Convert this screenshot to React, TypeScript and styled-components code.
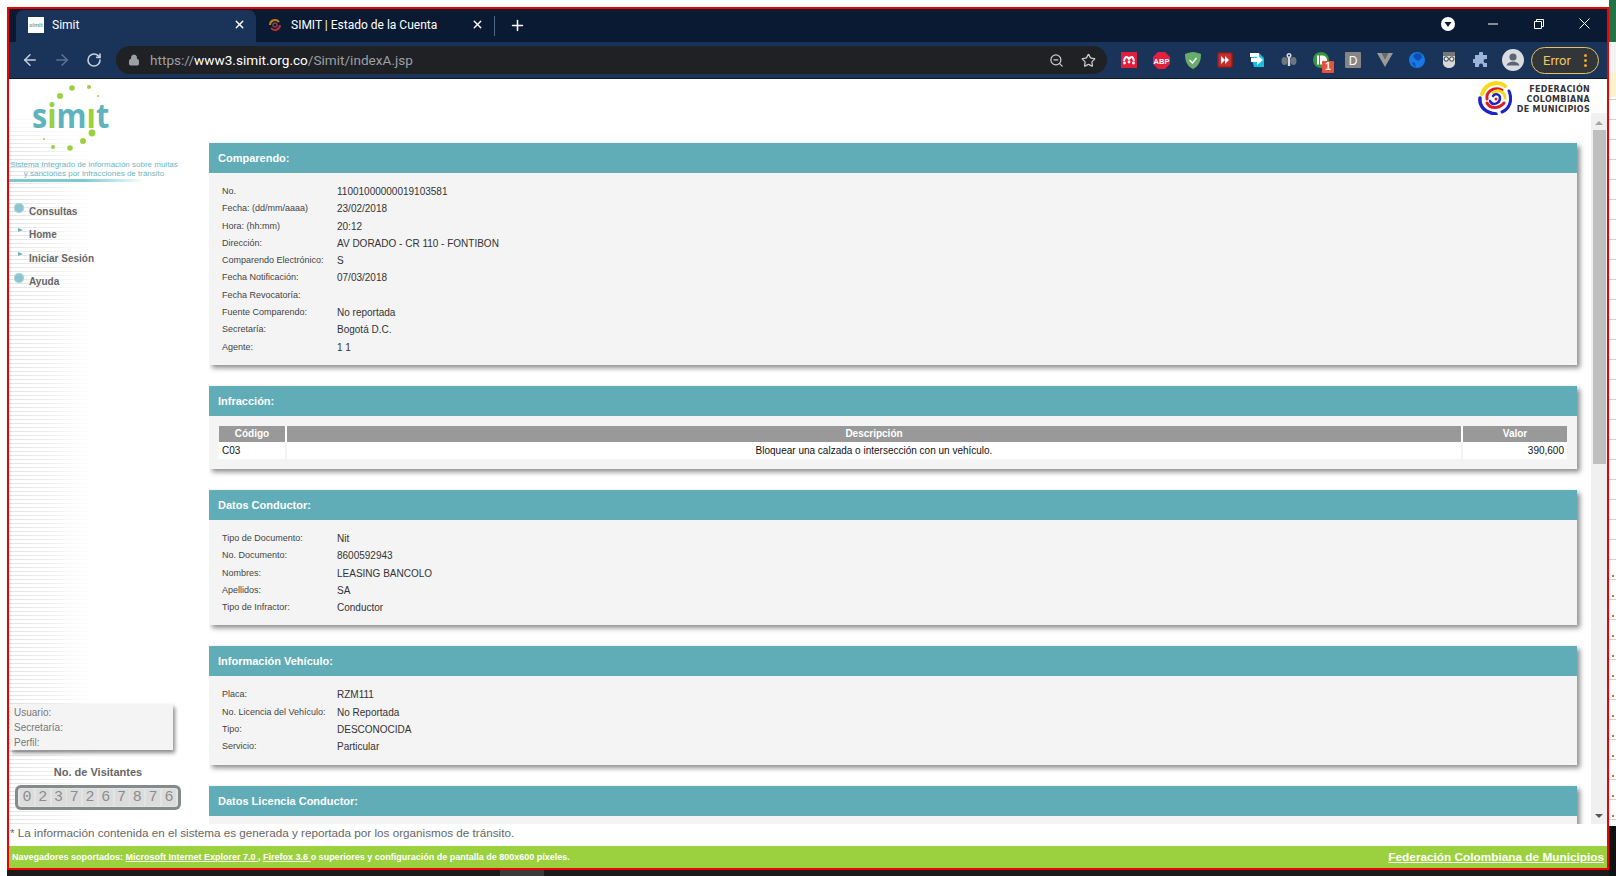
import React from 'react';
import styled, { createGlobalStyle } from 'styled-components';
import { ArrowLeft, ArrowRight, RotateCw, Lock, ZoomOut, Star, Plus, X } from 'lucide-react';

const comparendo = [
  ['No.', '11001000000019103581'],
  ['Fecha: (dd/mm/aaaa)', '23/02/2018'],
  ['Hora: (hh:mm)', '20:12'],
  ['Dirección:', 'AV DORADO - CR 110 - FONTIBON'],
  ['Comparendo Electrónico:', 'S'],
  ['Fecha Notificación:', '07/03/2018'],
  ['Fecha Revocatoría:', ''],
  ['Fuente Comparendo:', 'No reportada'],
  ['Secretaría:', 'Bogotá D.C.'],
  ['Agente:', '1 1'],
];

const conductor = [
  ['Tipo de Documento:', 'Nit'],
  ['No. Documento:', '8600592943'],
  ['Nombres:', 'LEASING BANCOLO'],
  ['Apellidos:', 'SA'],
  ['Tipo de Infractor:', 'Conductor'],
];

const vehiculo = [
  ['Placa:', 'RZM111'],
  ['No. Licencia del Vehículo:', 'No Reportada'],
  ['Tipo:', 'DESCONOCIDA'],
  ['Servicio:', 'Particular'],
];

const GlobalStyle = createGlobalStyle`
  html, body {
    margin: 0;
    padding: 0;
    overflow: hidden;
    background: #fff;
  }
  * {
    box-sizing: border-box;
  }
`;

const Screen = styled.div`
  display: flex;
  width: 1616px;
  height: 876px;
  overflow: hidden;
  font-family: 'Liberation Sans', Arial, sans-serif;
`;

const WindowColumn = styled.div`
  display: flex;
  flex-direction: column;
  width: 1609px;
  padding: 7px 0 0 7px;
`;

const BrowserWindow = styled.div`
  display: flex;
  flex-direction: column;
  height: 863px;
  border: 2px solid #f00000;
  background: #fff;
`;

const Taskbar = styled.div`
  flex: 1;
  overflow: hidden;
  padding: 4px 0 0 1538px;
  background: linear-gradient(to right, #1b1b1b 0 493px, #3a3a3a 493px 537px, #1b1b1b 537px);
  color: #fff;
  font-family: 'Noto Sans', sans-serif;
  font-size: 11px;
  line-height: 12px;
`;

const Peek = styled.div`
  flex: 1;
  background:
    repeating-linear-gradient(to bottom, transparent 0 19px, #cfcfcf 19px 20px),
    #fff;
  display: flex;
  flex-direction: column;
`;

const PeekBand = styled.div<{ $h: number; $c: string }>`
  height: ${p => p.$h}px;
  background: ${p => p.$c};
`;

const PeekFill = styled.div`
  flex: 1;
`;

const PeekMarks = styled.div`
  height: 260px;
  background: repeating-linear-gradient(to bottom, transparent 0 9px, #b5763a 9px 11px, transparent 11px 20px) 3px 0 / 2px 100% no-repeat;
`;

const TabStrip = styled.div`
  display: flex;
  align-items: flex-end;
  height: 33px;
  padding-left: 7px;
  background: #0a1a33;
  color: #fff;
  font-family: Roboto, 'Noto Sans', sans-serif;
  font-size: 12px;
`;

const Tab = styled.div<{ $active?: boolean }>`
  display: flex;
  align-items: center;
  width: ${p => (p.$active ? 240 : 238)}px;
  height: 32px;
  padding: 0 10px 3px ${p => (p.$active ? 12 : 11)}px;
  border-radius: 8px 8px 0 0;
  background: ${p => (p.$active ? '#1a3358' : 'transparent')};
`;

const TabTitle = styled.span`
  flex: 1;
  margin-left: 8px;
  white-space: nowrap;
`;

const FaviconBox = styled.span`
  display: flex;
  align-items: center;
  justify-content: center;
  width: 16px;
  height: 16px;
  background: #fff;
  color: #6aaeb8;
  font-size: 6px;
  font-weight: 700;
`;

const TabDivider = styled.span`
  width: 1px;
  height: 20px;
  margin-bottom: 6px;
  background: #54657e;
`;

const NewTab = styled.span`
  display: flex;
  margin: 0 0 8px 14px;
`;

const CaptionControls = styled.div`
  display: flex;
  align-items: center;
  margin-left: auto;
  align-self: stretch;
`;

const CaptionButton = styled.span<{ $w: number }>`
  display: flex;
  align-items: center;
  justify-content: center;
  width: ${p => p.$w}px;
  height: 100%;
  padding-bottom: 4px;
`;

const Toolbar = styled.div`
  display: flex;
  align-items: center;
  height: 37px;
  padding: 0 6px 0 5px;
  background: #1a3358;
  border-bottom: 1px solid #0a1a33;
`;

const NavButton = styled.span<{ $dim?: boolean }>`
  display: flex;
  align-items: center;
  justify-content: center;
  width: 32px;
  color: ${p => (p.$dim ? '#5f7391' : '#c5d0e0')};
`;

const Omnibox = styled.div`
  display: flex;
  align-items: center;
  width: 991px;
  height: 28px;
  margin: 0 6px;
  padding: 0 3px 0 12px;
  border-radius: 14px;
  background: #202124;
  color: #9aa0a6;
  font-family: Roboto, 'Noto Sans', sans-serif;
  font-size: 13.6px;
`;

const Url = styled.span`
  flex: 1;
  margin-left: 10px;
  white-space: nowrap;
`;

const UrlHost = styled.span`
  color: #fff;
`;

const OmniAction = styled.span`
  display: flex;
  width: 32px;
  justify-content: center;
  color: #c9ccd1;
`;

const Extension = styled.span`
  position: relative;
  display: flex;
  align-items: center;
  justify-content: center;
  width: 32px;
  height: 24px;
`;

const Badge = styled.span`
  position: absolute;
  left: 17px;
  top: 13px;
  width: 12px;
  height: 12px;
  border-radius: 1px;
  background: #e8503f;
  color: #fff;
  font: 700 10px/12px 'Liberation Sans', sans-serif;
  text-align: center;
`;

const ErrorPill = styled.div`
  display: flex;
  align-items: center;
  justify-content: space-between;
  width: 68px;
  height: 27px;
  margin-left: 2px;
  padding: 0 11px 0 11px;
  border: 1px solid #e8c35a;
  border-radius: 14px;
  background: #323639;
  color: #f0c766;
  font-family: Roboto, 'Noto Sans', sans-serif;
  font-size: 13px;
`;

const Kebab = styled.span`
  display: flex;
  flex-direction: column;
  gap: 2px;
`;

const KebabDot = styled.span`
  width: 3px;
  height: 3px;
  border-radius: 50%;
  background: #f5a623;
`;

const Page = styled.div`
  display: flex;
  flex: 1;
  min-height: 0;
`;

const Sidebar = styled.aside`
  display: flex;
  flex-direction: column;
  width: 200px;
  padding-bottom: 14px;
  background:
    linear-gradient(to bottom, #fff 0 35px, rgba(255, 255, 255, 0) 70px),
    linear-gradient(to right, rgba(255, 255, 255, 0), #fff 85px),
    repeating-linear-gradient(to bottom, #e2e2e2 0 1px, #fff 1px 4px);
`;

const LogoMark = styled.svg`
  display: block;
  margin: 1px 0 0 11px;
`;

const Tagline = styled.div`
  width: 170px;
  margin-top: 5px;
  color: #6eb6c4;
  font-size: 8px;
  line-height: 9px;
  text-align: center;
  white-space: nowrap;
`;

const BrandRule = styled.div`
  width: 136px;
  height: 3px;
  margin-top: 1px;
  background: linear-gradient(to right, #7cc9d2 55%, rgba(124, 201, 210, 0));
`;

const Menu = styled.nav`
  margin-top: 18px;
`;

const MenuItem = styled.div`
  position: relative;
  height: 23.3px;
  padding-left: 20px;
  color: #666;
  font-size: 10px;
  font-weight: 700;
  line-height: 23.3px;
`;

const MenuDisc = styled.span`
  position: absolute;
  left: 5px;
  top: 3px;
  width: 10px;
  height: 10px;
  border-radius: 50%;
  background: #8cc5cf;
  box-shadow: inset 0 0 0 1px #a9d6dd;
`;

const MenuArrow = styled.span`
  position: absolute;
  left: 9px;
  top: 5px;
  border-left: 5px solid #6fb3bf;
  border-top: 2.5px solid transparent;
  border-bottom: 2.5px solid transparent;
`;

const UserBox = styled.div`
  width: 163px;
  margin: auto 0 0 1px;
  padding: 1px 0 0 4px;
  background: #f4f4f4;
  box-shadow: 2px 3px 4px rgba(0, 0, 0, 0.45);
  color: #777;
  font-size: 10px;
  line-height: 15px;
`;

const VisitorTitle = styled.div`
  width: 178px;
  margin-top: 14px;
  color: #666;
  font-size: 11px;
  font-weight: 700;
  line-height: 16px;
  text-align: center;
`;

const Counter = styled.div`
  display: flex;
  justify-content: space-between;
  width: 166px;
  height: 25px;
  margin: 5px 0 0 6px;
  padding: 4px 5px;
  border-radius: 6px;
  background: #e4e4e4;
  box-shadow: inset 0 0 0 3px #858b8b;
`;

const CounterDigit = styled.span`
  width: 14px;
  background-color: #dcdcdc;
  background-image: radial-gradient(#bcbcbc 0.5px, transparent 0.6px);
  background-size: 2px 2px;
  color: #8c8c8c;
  font: 15px/17px 'Liberation Mono', monospace;
  text-align: center;
`;

const Main = styled.main`
  display: flex;
  flex-direction: column;
  flex: 1;
  min-width: 0;
`;

const TopBar = styled.div`
  display: flex;
  justify-content: flex-end;
  gap: 5px;
  height: 34px;
  padding: 2px 17px 0 0;
`;

const FederationName = styled.div`
  color: #333;
  font-family: 'DejaVu Sans', sans-serif;
  font-size: 8px;
  font-weight: 700;
  letter-spacing: 0.3px;
  line-height: 10px;
  padding-top: 4px;
  text-align: right;
`;

const ScrollRegion = styled.div`
  display: flex;
  flex: 1;
  min-height: 0;
`;

const Panels = styled.div`
  flex: 1;
  display: flex;
  flex-direction: column;
  gap: 21px;
  padding: 30px 14px 0 0;
  overflow: hidden;
`;

const Section = styled.section`
  flex: none;
  background: #f4f4f4;
  box-shadow: 3px 3px 5px rgba(0, 0, 0, 0.45);
`;

const SectionHeader = styled.h2`
  height: 30px;
  margin: 0;
  padding-left: 9px;
  background: #60acb7;
  color: #fff;
  font-size: 11px;
  font-weight: 700;
  line-height: 31px;
`;

const InfoList = styled.div`
  padding: 10px 0 9px 13px;
`;

const InfoRow = styled.div`
  display: grid;
  grid-template-columns: 115px 1fr;
  height: 17.3px;
  font-size: 10px;
  line-height: 17px;
`;

const InfoLabel = styled.span`
  color: #444;
  font-size: 9px;
  white-space: nowrap;
`;

const InfoValue = styled.span`
  color: #333;
`;

const TableWrap = styled.div`
  padding: 10px;
`;

const Grid = styled.div<{ $sep: string; $bg: string }>`
  display: grid;
  grid-template-columns: 66px 1fr 104px;
  column-gap: 2px;
  background: ${p => p.$sep};
  & > * {
    background: ${p => p.$bg};
  }
`;

const HeadCell = styled.div`
  height: 16px;
  color: #fff;
  font-size: 10px;
  font-weight: 700;
  line-height: 16px;
  text-align: center;
`;

const BodyCell = styled.div<{ $align?: string }>`
  height: 17px;
  padding: 0 3px;
  color: #111;
  font-size: 10px;
  line-height: 18px;
  text-align: ${p => p.$align || 'left'};
`;

const Scrollbar = styled.div`
  display: flex;
  flex-direction: column;
  align-items: center;
  width: 16px;
  background: #f0f0f0;
`;

const ScrollArrow = styled.span<{ $down?: boolean }>`
  height: 10px;
  margin-top: ${p => (p.$down ? 'auto' : '2px')};
  margin-bottom: ${p => (p.$down ? '0' : '-6px')};
  border-left: 4px solid transparent;
  border-right: 4px solid transparent;
  ${p => (p.$down ? 'border-top: 4px solid #555;' : 'border-bottom: 4px solid #a3a3a3;')}
`;

const ScrollThumb = styled.div`
  width: 13px;
  height: 334px;
  margin-top: 11px;
  background: #bfbfbf;
`;

const Note = styled.div`
  height: 22px;
  padding-left: 1px;
  color: #666;
  font-size: 11.7px;
  line-height: 18px;
`;

const FooterBar = styled.footer`
  display: flex;
  align-items: center;
  justify-content: space-between;
  height: 22px;
  padding: 0 3px 0 3px;
  background: #9bd03f;
  color: #fff;
  font-size: 9px;
  font-weight: 700;
`;

const FooterLink = styled.a<{ $big?: boolean }>`
  color: #fff;
  font-size: ${p => (p.$big ? 11.8 : 9)}px;
  text-decoration: underline;
`;

const Swirl = () => (
  <svg width="34" height="34" viewBox="0 0 34 34" fill="none" strokeLinecap="round">
    <path d="M4 13 C7 3 19 -1 27 5" stroke="#f5dc1a" strokeWidth="4" />
    <path d="M31 10 C35 20 31 28 24 31" stroke="#1c22c8" strokeWidth="3" />
    <path d="M2 17 C1 26 8 32 18 33" stroke="#1c22c8" strokeWidth="3.5" />
    <path d="M24 9 C15 5 8 11 9 18" stroke="#e01b24" strokeWidth="3" />
    <path d="M9 22 C12 28 21 28 26 22" stroke="#e01b24" strokeWidth="3" />
    <path d="M27 17 C27 10 19 8 15 12" stroke="#f5dc1a" strokeWidth="3" />
    <path d="M12 20 C14 25 22 23 22 17 C22 13 17 12 15 15" stroke="#1c22c8" strokeWidth="2.5" />
    <circle cx="18" cy="18" r="1.5" fill="#e01b24" />
  </svg>
);

const SmallSwirl = () => (
  <svg width="16" height="16" viewBox="0 0 16 16" fill="none">
    <path d="M3 8a5 5 0 0 1 9-3" stroke="#b8801a" strokeWidth="2" />
    <path d="M13 8a5 5 0 0 1-9 3" stroke="#b8352b" strokeWidth="2" />
    <circle cx="8" cy="8" r="2" stroke="#8a3b5a" strokeWidth="1.5" />
  </svg>
);

const SimitLogo = () => (
  <LogoMark width="110" height="75" viewBox="20 80 110 75">
    <text
      transform="translate(32 128) scale(0.9 1)"
      fontFamily="'Open Sans', sans-serif"
      fontWeight="700"
      fontSize="34"
      fill="#5fb3bd"
    >
      s<tspan fill="#9bd03f">i</tspan>m<tspan fill="#9bd03f">ı</tspan>t
    </text>
    <g fill="#9bd03f">
      <circle cx="72" cy="88" r="2.8" />
      <circle cx="89" cy="87" r="2" />
      <circle cx="98" cy="96" r="1" />
      <circle cx="60" cy="96" r="3" />
      <circle cx="92" cy="133" r="3.4" />
      <circle cx="83" cy="141" r="3" />
      <circle cx="70" cy="148" r="2.8" />
      <circle cx="53" cy="147" r="2" />
      <circle cx="44" cy="139" r="1" />
    </g>
  </LogoMark>
);

const extensions = [
  <svg key="mendeley" width="16" height="16" viewBox="0 0 16 16">
    <rect width="16" height="16" fill="#e01f3d" />
    <path d="M3 9c1-5 3-5 5-2 2-3 4-3 5 2" fill="none" stroke="#fff" strokeWidth="2" />
    <circle cx="3.5" cy="11" r="1.4" fill="#fff" />
    <circle cx="8" cy="10" r="1.4" fill="#fff" />
    <circle cx="12.5" cy="11" r="1.4" fill="#fff" />
  </svg>,
  <svg key="abp" width="17" height="17" viewBox="0 0 17 17">
    <path d="M5 0h7l5 5v7l-5 5H5l-5-5V5z" fill="#e3213f" />
    <text x="8.5" y="11.5" fontSize="7.5" fontWeight="700" fill="#fff" textAnchor="middle" fontFamily="'Liberation Sans', sans-serif">
      ABP
    </text>
  </svg>,
  <svg key="guard" width="16" height="17" viewBox="0 0 16 17">
    <path d="M8 0c3 0 5 1 8 2 0 7-2 12-8 15C2 14 0 9 0 2c3-1 5-2 8-2z" fill="#68ac6c" />
    <path d="M4.5 8l3 3 4-5" fill="none" stroke="#fff" strokeWidth="1.4" />
  </svg>,
  <svg key="ff" width="16" height="16" viewBox="0 0 16 16">
    <rect x="0.8" y="0.8" width="14.4" height="14.4" rx="2" fill="#c62f2f" stroke="#7c2020" strokeWidth="1.6" />
    <path d="M4 4l4 4-4 4zM8 4l4 4-4 4z" fill="#fff" />
  </svg>,
  <svg key="share" width="16" height="16" viewBox="0 0 16 16">
    <path d="M1 1h9l5 5v9H5z" fill="#14bfe0" />
    <path d="M1 1h9v4H1z" fill="#fff" />
    <path d="M2 6h6V3l6 5-6 5v-3H2z" fill="#fff" />
  </svg>,
  <svg key="wrench" width="16" height="16" viewBox="0 0 16 16">
    <ellipse cx="3.5" cy="9" rx="3" ry="4" fill="#6f7680" />
    <ellipse cx="12.5" cy="9" rx="3" ry="4" fill="#6f7680" />
    <rect x="6.8" y="4" width="2.4" height="10" fill="#d7dade" />
    <circle cx="8" cy="3.5" r="2.5" fill="#d7dade" />
    <circle cx="8" cy="3.5" r="1" fill="#1a3358" />
  </svg>,
  <svg key="pause" width="16" height="16" viewBox="0 0 16 16">
    <circle cx="8" cy="8" r="8" fill="#3b963f" />
    <rect x="4" y="3.5" width="2" height="9" fill="#fff" />
    <path d="M7 3.5h2.5a4 4 0 0 1 0 9H7z" fill="#fff" />
  </svg>,
  <svg key="d" width="16" height="16" viewBox="0 0 16 16">
    <rect width="16" height="16" rx="1" fill="#858585" />
    <text x="8" y="12.5" fontSize="12" fill="#fff" textAnchor="middle" fontFamily="'Liberation Sans', sans-serif">
      D
    </text>
  </svg>,
  <svg key="v" width="16" height="14" viewBox="0 0 16 14">
    <path d="M0 0h5l3 6 3-6h5L8 14z" fill="#9a9a9a" />
    <path d="M5 0h6L8 6z" fill="#6c6c6c" />
  </svg>,
  <svg key="globe" width="16" height="16" viewBox="0 0 16 16">
    <circle cx="8" cy="8" r="8" fill="#1978e5" />
    <path d="M7 1l5 1 1 4-4 3-3-2-2-3zM3 10l3 1 1 4-3-2z" fill="#0c4fb3" />
  </svg>,
  <svg key="face" width="14" height="16" viewBox="0 0 14 16">
    <path d="M1 5c0-3 3-5 6-5s6 2 6 5v6c0 3-3 5-6 5s-6-2-6-5z" fill="#d8d8d8" />
    <path d="M1 0h12v4H1z" fill="#777" />
    <circle cx="4.2" cy="7" r="2.2" fill="#eee" stroke="#333" />
    <circle cx="9.8" cy="7" r="2.2" fill="#eee" stroke="#333" />
  </svg>,
  <svg key="puzzle" width="16" height="16" viewBox="0 0 16 16">
    <path
      d="M6 1.5a2 2 0 0 1 4 0V3h4v4h-1.5a2 2 0 0 0 0 4H14v4h-4v-1.5a2 2 0 0 0-4 0V15H2v-4H.8a2 2 0 0 1 0-4H2V3h4z"
      fill="#9cb4d8"
    />
  </svg>,
  <svg key="avatar" width="22" height="22" viewBox="0 0 22 22">
    <circle cx="11" cy="11" r="11" fill="#dadce0" />
    <circle cx="11" cy="8" r="3.6" fill="#5a6678" />
    <path d="M4.5 16.5c1-3 4-4 6.5-4s5.500 1 6.500 4z" fill="#5a6678" />
  </svg>,
];

const InfoSection = ({ title, rows }: { title: string; rows: string[][] }) => (
  <Section>
    <SectionHeader>{title}</SectionHeader>
    <InfoList>
      {rows.map(([label, value]) => (
        <InfoRow key={label}>
          <InfoLabel>{label}</InfoLabel>
          <InfoValue>{value}</InfoValue>
        </InfoRow>
      ))}
    </InfoList>
  </Section>
);

export default function App() {
  return (
    <Screen>
      <GlobalStyle />
      <WindowColumn>
        <BrowserWindow>
          <TabStrip>
            <Tab $active>
              <FaviconBox>simit</FaviconBox>
              <TabTitle>Simit</TabTitle>
              <X size={13} strokeWidth={2.5} />
            </Tab>
            <Tab>
              <SmallSwirl />
              <TabTitle>SIMIT | Estado de la Cuenta</TabTitle>
              <X size={13} strokeWidth={2.5} />
            </Tab>
            <TabDivider />
            <NewTab>
              <Plus size={17} strokeWidth={2.2} />
            </NewTab>
            <CaptionControls>
              <CaptionButton $w={46}>
                <svg width="14" height="14" viewBox="0 0 14 14">
                  <circle cx="7" cy="7" r="7" fill="#fff" />
                  <path d="M3.500 5h7L7 10z" fill="#0a1a33" />
                </svg>
              </CaptionButton>
              <CaptionButton $w={44}>
                <svg width="10" height="10" viewBox="0 0 10 10">
                  <path d="M0 5h10" stroke="#fff" />
                </svg>
              </CaptionButton>
              <CaptionButton $w={47}>
                <svg width="10" height="10" viewBox="0 0 10 10" fill="none" stroke="#fff">
                  <path d="M.5 2.500h7v7h-7zM2.500 2.500v-2h7v7h-2" />
                </svg>
              </CaptionButton>
              <CaptionButton $w={45}>
                <svg width="11" height="11" viewBox="0 0 11 11" stroke="#fff">
                  <path d="M.5.5l10 10M10.500.5l-10 10" />
                </svg>
              </CaptionButton>
            </CaptionControls>
          </TabStrip>
          <Toolbar>
            <NavButton>
              <ArrowLeft size={18} />
            </NavButton>
            <NavButton $dim>
              <ArrowRight size={18} />
            </NavButton>
            <NavButton>
              <RotateCw size={16} strokeWidth={2.4} />
            </NavButton>
            <Omnibox>
              <Lock size={12} fill="#9aa0a6" />
              <Url>
                https://<UrlHost>www3.simit.org.co</UrlHost>/Simit/indexA.jsp
              </Url>
              <OmniAction>
                <ZoomOut size={15} />
              </OmniAction>
              <OmniAction>
                <Star size={15} />
              </OmniAction>
            </Omnibox>
            {extensions.map((icon, i) => (
              <Extension key={i}>
                {icon}
                {i === 6 && <Badge>1</Badge>}
              </Extension>
            ))}
            <ErrorPill>
              Error
              <Kebab>
                <KebabDot />
                <KebabDot />
                <KebabDot />
              </Kebab>
            </ErrorPill>
          </Toolbar>
          <Page>
            <Sidebar>
              <SimitLogo />
              <Tagline>
                Sistema Integrado de información sobre multas
                <br />y sanciones por infracciones de tránsito
              </Tagline>
              <BrandRule />
              <Menu>
                <MenuItem>
                  <MenuDisc />
                  Consultas
                </MenuItem>
                <MenuItem>
                  <MenuArrow />
                  Home
                </MenuItem>
                <MenuItem>
                  <MenuArrow />
                  Iniciar Sesión
                </MenuItem>
                <MenuItem>
                  <MenuDisc />
                  Ayuda
                </MenuItem>
              </Menu>
              <UserBox>
                Usuario:
                <br />
                Secretaría:
                <br />
                Perfil:
              </UserBox>
              <VisitorTitle>No. de Visitantes</VisitorTitle>
              <Counter>
                {'0237267876'.split('').map((d, i) => (
                  <CounterDigit key={i}>{d}</CounterDigit>
                ))}
              </Counter>
            </Sidebar>
            <Main>
              <TopBar>
                <Swirl />
                <FederationName>
                  FEDERACIÓN
                  <br />
                  COLOMBIANA
                  <br />
                  DE MUNICIPIOS
                </FederationName>
              </TopBar>
              <ScrollRegion>
                <Panels>
                  <InfoSection title="Comparendo:" rows={comparendo} />
                  <Section>
                    <SectionHeader>Infracción:</SectionHeader>
                    <TableWrap>
                      <Grid $sep="#fff" $bg="#999">
                        <HeadCell>Código</HeadCell>
                        <HeadCell>Descripción</HeadCell>
                        <HeadCell>Valor</HeadCell>
                      </Grid>
                      <Grid $sep="#f4f4f4" $bg="#fff">
                        <BodyCell>C03</BodyCell>
                        <BodyCell $align="center">Bloquear una calzada o intersección con un vehículo.</BodyCell>
                        <BodyCell $align="right">390,600</BodyCell>
                      </Grid>
                    </TableWrap>
                  </Section>
                  <InfoSection title="Datos Conductor:" rows={conductor} />
                  <InfoSection title="Información Vehículo:" rows={vehiculo} />
                  <InfoSection title="Datos Licencia Conductor:" rows={[]} />
                </Panels>
                <Scrollbar>
                  <ScrollArrow />
                  <ScrollThumb />
                  <ScrollArrow $down />
                </Scrollbar>
              </ScrollRegion>
            </Main>
          </Page>
          <Note>* La información contenida en el sistema es generada y reportada por los organismos de tránsito.</Note>
          <FooterBar>
            <span>
              Navegadores soportados: <FooterLink>Microsoft Internet Explorer 7.0 </FooterLink>,{' '}
              <FooterLink>Firefox 3.6 </FooterLink>o superiores y configuración de pantalla de 800x600 píxeles.
            </span>
            <FooterLink $big>Federación Colombiana de Municipios</FooterLink>
          </FooterBar>
        </BrowserWindow>
        <Taskbar>00:30</Taskbar>
      </WindowColumn>
      <Peek>
        <PeekBand $h={42} $c="#217346" />
        <PeekBand $h={31} $c="#f3f3f3" />
        <PeekBand $h={24} $c="#fff2cc" />
        <PeekFill />
        <PeekMarks />
        <PeekBand $h={50} $c="#111" />
      </Peek>
    </Screen>
  );
}
